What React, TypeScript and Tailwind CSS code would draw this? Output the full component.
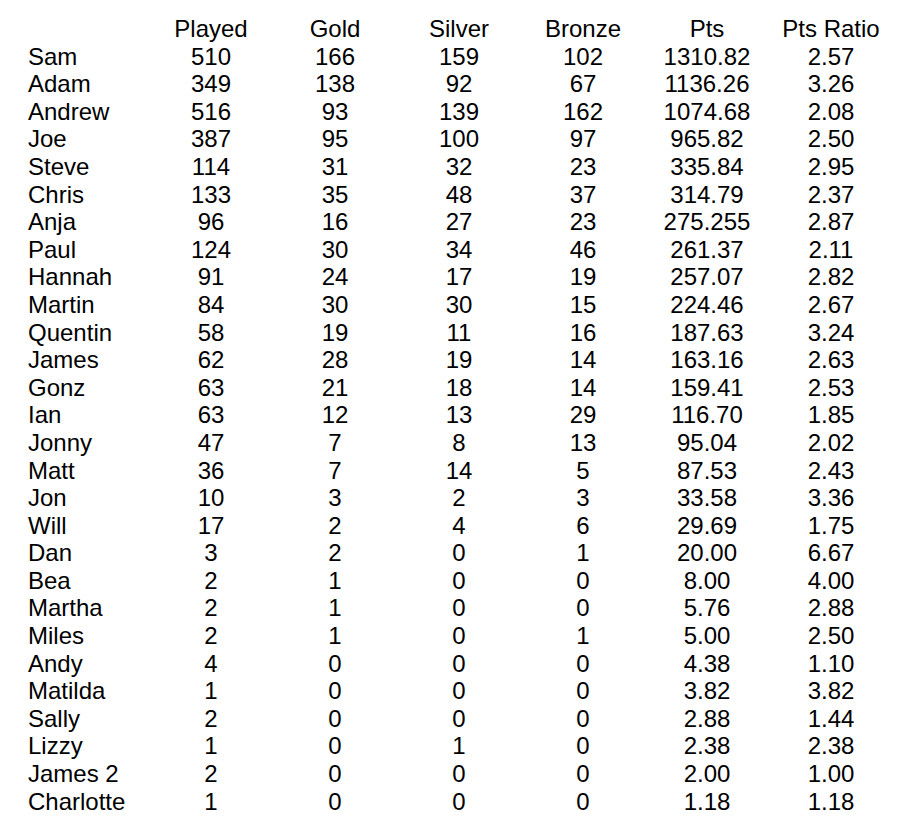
const headers = ["Played", "Gold", "Silver", "Bronze", "Pts", "Pts Ratio"];

const rows: [string, ...string[]][] = [
  ["Sam", "510", "166", "159", "102", "1310.82", "2.57"],
  ["Adam", "349", "138", "92", "67", "1136.26", "3.26"],
  ["Andrew", "516", "93", "139", "162", "1074.68", "2.08"],
  ["Joe", "387", "95", "100", "97", "965.82", "2.50"],
  ["Steve", "114", "31", "32", "23", "335.84", "2.95"],
  ["Chris", "133", "35", "48", "37", "314.79", "2.37"],
  ["Anja", "96", "16", "27", "23", "275.255", "2.87"],
  ["Paul", "124", "30", "34", "46", "261.37", "2.11"],
  ["Hannah", "91", "24", "17", "19", "257.07", "2.82"],
  ["Martin", "84", "30", "30", "15", "224.46", "2.67"],
  ["Quentin", "58", "19", "11", "16", "187.63", "3.24"],
  ["James", "62", "28", "19", "14", "163.16", "2.63"],
  ["Gonz", "63", "21", "18", "14", "159.41", "2.53"],
  ["Ian", "63", "12", "13", "29", "116.70", "1.85"],
  ["Jonny", "47", "7", "8", "13", "95.04", "2.02"],
  ["Matt", "36", "7", "14", "5", "87.53", "2.43"],
  ["Jon", "10", "3", "2", "3", "33.58", "3.36"],
  ["Will", "17", "2", "4", "6", "29.69", "1.75"],
  ["Dan", "3", "2", "0", "1", "20.00", "6.67"],
  ["Bea", "2", "1", "0", "0", "8.00", "4.00"],
  ["Martha", "2", "1", "0", "0", "5.76", "2.88"],
  ["Miles", "2", "1", "0", "1", "5.00", "2.50"],
  ["Andy", "4", "0", "0", "0", "4.38", "1.10"],
  ["Matilda", "1", "0", "0", "0", "3.82", "3.82"],
  ["Sally", "2", "0", "0", "0", "2.88", "1.44"],
  ["Lizzy", "1", "0", "1", "0", "2.38", "2.38"],
  ["James 2", "2", "0", "0", "0", "2.00", "1.00"],
  ["Charlotte", "1", "0", "0", "0", "1.18", "1.18"],
];

export default function App() {
  return (
    <main className="min-h-screen w-[899px] bg-white pl-[28px] pt-[15px] font-['Liberation_Sans',Arial,sans-serif] text-[24px] leading-[27.6px] text-black">
      <div className="grid grid-cols-[121px_repeat(6,124px)]">
        <div />
        {headers.map((h) => (
          <div key={h} className="text-center">
            {h}
          </div>
        ))}
        {rows.map((row) =>
          row.map((cell, i) => (
            <div key={row[0] + i} className={i === 0 ? "text-left" : "text-center"}>
              {cell}
            </div>
          ))
        )}
      </div>
    </main>
  );
}
